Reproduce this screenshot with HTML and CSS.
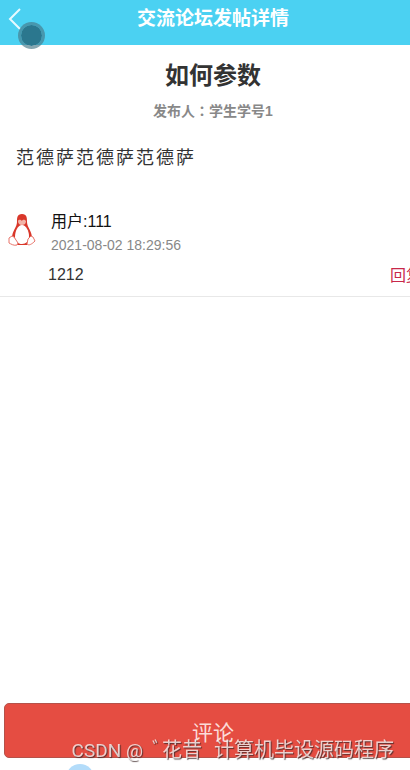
FILE: index.html
```
<!DOCTYPE html>
<html lang="zh-CN">
<head>
    <meta charset="UTF-8">
    <meta name="viewport" content="width=device-width, initial-scale=1.0">
    <title>交流论坛发帖详情</title>
    <link rel="stylesheet" href="styles.css">
</head>
<body>
    <div class="page">
        <header class="navbar">
            <button class="back-btn" type="button" aria-label="返回">
                <svg width="14" height="22" viewBox="0 0 14 22" fill="none" stroke="#e6faff" stroke-width="2">
                    <path d="M12 1L2 11L12 21"/>
                </svg>
            </button>
            <h1 class="navbar-title">交流论坛发帖详情</h1>
            <span class="touch-dot"></span>
        </header>

        <main class="content">
            <h2 class="post-title">如何参数</h2>
            <p class="post-author">发布人<span class="colon" lang="zh-TW">：</span>学生学号1</p>
            <p class="post-body">范德萨范德萨范德萨</p>

            <section class="comment">
                <svg class="avatar" viewBox="0 0 28 34" role="img" aria-label="头像">
                    <path d="M14 1C9 1 9 5 9 9C9 14 4 18 4 25L9 32H19L24 25C24 18 19 14 19 9C19 5 19 1 14 1Z" fill="#d9372a"/>
                    <path d="M14 12C10 12 7 18 7 24C7 29 10 31 14 31C18 31 21 28 21 23C21 18 18 12 14 12Z" fill="#fff"/>
                    <path d="M10 8C11 6 13 7 14 8C15 6 17 7 18 8C18 11 16 12 14 12C11 12 10 10 10 8Z" fill="#f2b5a9"/>
                    <path d="M4 23L1 25V30C3 31 6 33 9 32L10 30L6 24Z" fill="#fff" stroke="#e8756b"/>
                    <path d="M23 23L20 26L19 31C21 33 24 31 27 28L25 24Z" fill="#fff" stroke="#e8756b"/>
                </svg>
                <div class="comment-user">
                    <div class="comment-name">用户:111</div>
                    <div class="comment-time">2021-08-02 18:29:56</div>
                </div>
                <div class="comment-text">1212</div>
                <a class="reply-link" href="#">回复</a>
            </section>
        </main>

        <footer class="footer">
            <button class="comment-btn" type="button">评论</button>
            <span class="footer-dot"></span>
        </footer>
    </div>

    <div class="watermark">
        <span class="watermark-site">CSDN @</span>
        <span>ﾞ花昔</span>
        <span>计算机毕设源码程序</span>
    </div>
</body>
</html>
```
FILE: styles.css
```
* {
    box-sizing: border-box;
}
html {
    overflow: hidden;
}
body {
    margin: 0;
    overflow: hidden;
    background-color: #fff;
    color: #333;
    font-family: "Liberation Sans", "Noto Sans CJK SC", sans-serif;
}
h1, h2, p {
    margin: 0;
}
/* slightly wider than the screen, the right edge is cut off */
.page {
    display: flex;
    flex-direction: column;
    width: calc(100% + 16px);
    height: 100vh;
}
.navbar {
    position: relative;
    display: flex;
    align-items: center;
    padding: 7px 8px 14px;
    background-color: #4bd1f2;
}
.back-btn {
    display: flex;
    width: 24px;
    padding: 0;
    border: none;
    background: none;
    cursor: pointer;
}
.navbar-title {
    flex: 1;
    margin-right: 24px;
    color: #fff;
    font-size: 19px;
    line-height: 24px;
    text-align: center;
}
.touch-dot {
    position: absolute;
    top: 22px;
    left: 18px;
    width: 27px;
    height: 27px;
    border: 3px solid rgba(70, 120, 135, 0.65);
    border-radius: 50%;
    background-color: #2b778e;
    background-clip: padding-box;
}
.content {
    flex: 1;
}
.post-title {
    padding-top: 13px;
    font-size: 24px;
    line-height: 36px;
    text-align: center;
}
.post-author {
    color: #888;
    font-size: 14px;
    font-weight: bold;
    line-height: 34px;
    text-align: center;
}
.colon {
    font-family: "Noto Sans CJK TC", sans-serif;
    line-height: 1;
}
.post-body {
    padding: 16px;
    font-size: 18px;
    letter-spacing: 2px;
    line-height: 28px;
}
.comment {
    display: grid;
    grid-template-columns: 40px 1fr auto;
    padding: 22px 4px 0 8px;
    border-bottom: 1px solid #e8e8e8;
}
.avatar {
    width: 28px;
    height: 34px;
    margin-top: 3px;
}
.comment-user {
    grid-column: 2 / 4;
    padding-left: 3px;
}
.comment-name {
    color: #111;
    font-size: 16px;
    line-height: 24px;
}
.comment-time {
    color: #888;
    font-size: 14px;
    line-height: 22px;
}
.comment-text {
    grid-column: 2;
    font-size: 16px;
    line-height: 38px;
}
.reply-link {
    color: #c8284a;
    font-size: 16px;
    line-height: 40px;
    text-decoration: none;
}
.footer {
    position: relative;
    padding: 0 4px 12px;
}
.comment-btn {
    width: 100%;
    height: 55px;
    border: 1px solid #b5524a;
    border-radius: 5px;
    background-color: #e54d42;
    color: #fbdcd9;
    font-family: inherit;
    font-size: 21px;
    cursor: pointer;
}
.footer-dot {
    position: absolute;
    bottom: -22px;
    left: 66px;
    width: 28px;
    height: 28px;
    border-radius: 50%;
    background-color: #b3dcfa;
}
.watermark {
    position: fixed;
    right: 16px;
    bottom: 4px;
    display: flex;
    align-items: baseline;
    gap: 12px;
    color: rgba(255, 255, 255, 0.75);
    font-size: 20px;
    line-height: 30px;
    text-shadow: 1px 1px 1px rgba(60, 40, 40, 0.8);
    white-space: nowrap;
    pointer-events: none;
}
.watermark-site {
    margin-right: -3px;
    font-family: Roboto, sans-serif;
    font-size: 19px;
}
```
